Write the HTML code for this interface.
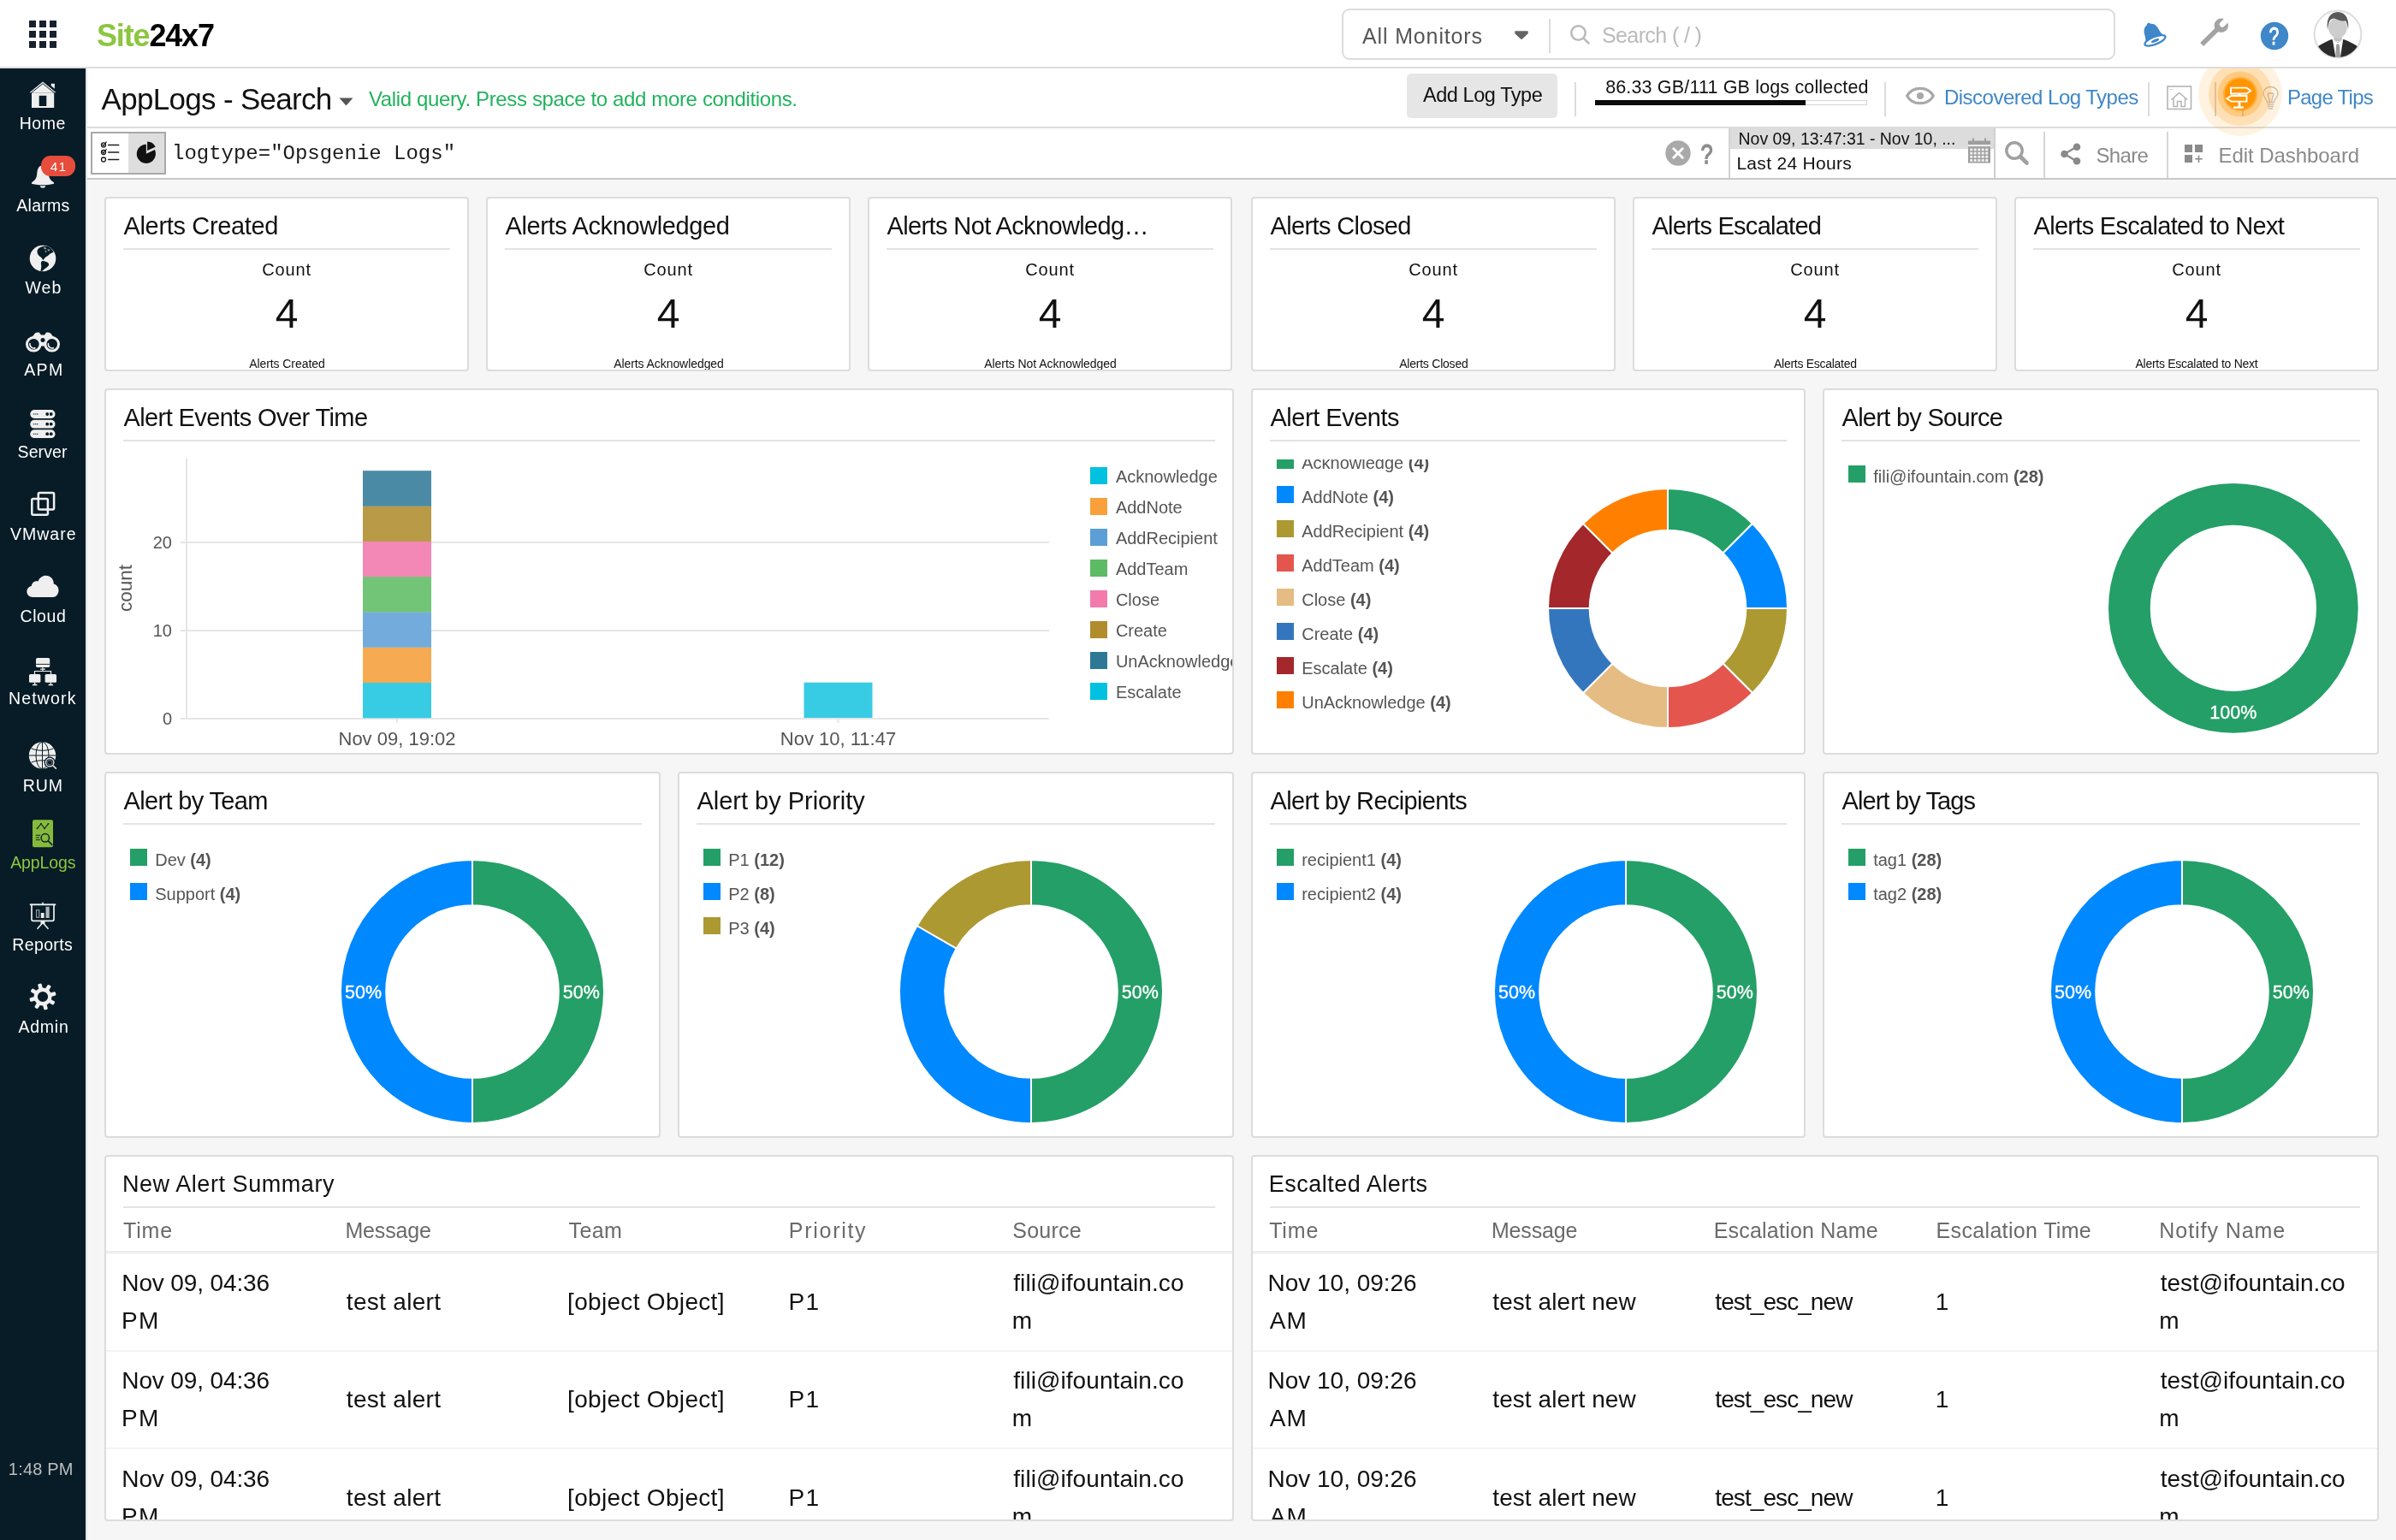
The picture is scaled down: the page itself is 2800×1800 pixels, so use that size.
<!DOCTYPE html>
<html lang="en">
<head>
<meta charset="utf-8">
<title>AppLogs - Search</title>
<style>
*{box-sizing:border-box;margin:0;padding:0}
html,body{width:2800px;height:1800px;overflow:hidden;background:#f6f6f6}
body{will-change:transform;position:relative;font-family:"Liberation Sans",sans-serif;color:#111;-webkit-font-smoothing:antialiased}
.abs{position:absolute}
.t{position:absolute;white-space:nowrap;line-height:1}
#hdr{position:absolute;left:0;top:0;width:2800px;height:80px;background:#fff;border-bottom:2px solid #dcdcdc}
#side{position:absolute;left:0;top:80px;width:100px;height:1720px;background:#081c27}
#sideb{position:absolute;left:100px;top:80px;width:2px;height:1720px;background:#e3e3e3}
#tbar{position:absolute;left:102px;top:80px;width:2698px;height:70px;background:#fff;border-bottom:2px solid #dcdcdc}
#qbar{position:absolute;left:102px;top:150px;width:2698px;height:60px;background:#fff;border-bottom:2px solid #c8c8c8}
.card{position:absolute;background:#fff;border:2px solid #dcdcdc;border-radius:4px;overflow:hidden}
.ctitle{position:absolute;left:20px;top:17px;font-size:28px;line-height:34px;white-space:nowrap;color:#111}
.cline{position:absolute;left:20px;right:20px;top:58px;height:2px;background:#e4e4e4}
.nav{position:absolute;left:0;width:100px;text-align:center;color:#fff;font-size:19px;line-height:1;white-space:nowrap}
.vdiv{position:absolute;width:2px;background:#dcdcdc}
.lg{position:absolute;font-size:20px;line-height:1;color:#555;white-space:nowrap}
.lg b{font-weight:bold;color:#555}
.sq{position:absolute;width:20px;height:20px}
.th{position:absolute;font-size:26px;line-height:1;color:#666;white-space:nowrap}
.td{position:absolute;font-size:27px;line-height:44px;color:#111;white-space:nowrap}
.rowline{position:absolute;left:0;right:0;height:2px;background:#f0f0f0}
svg{position:absolute;overflow:visible}
svg text{font-family:"Liberation Sans",sans-serif}
</style>
</head>
<body>
<div id="hdr">
  <svg style="left:34px;top:24px" width="32" height="32" viewBox="0 0 32 32" fill="#18222f">
    <rect x="0" y="0" width="8" height="8"/><rect x="12" y="0" width="8" height="8"/><rect x="24" y="0" width="8" height="8"/>
    <rect x="0" y="12" width="8" height="8"/><rect x="12" y="12" width="8" height="8"/><rect x="24" y="12" width="8" height="8"/>
    <rect x="0" y="24" width="8" height="8"/><rect x="12" y="24" width="8" height="8"/><rect x="24" y="24" width="8" height="8"/>
  </svg>
  <div class="t" id="logo" style="letter-spacing:-1.16px;left:113px;top:23.8px;font-size:36px;font-weight:bold;color:#000"><span style="color:#8cc63f">Site</span>24x7</div>
  <div class="abs" style="left:1568px;top:10px;width:904px;height:60px;border:2px solid #dcdcdc;border-radius:9px;background:#fff"></div>
  <div class="t" id="allmon" style="letter-spacing:0.86px;left:1592px;top:30.1px;font-size:25px;color:#555">All Monitors</div>
  <svg style="left:1769px;top:34.700px" width="18" height="12" viewBox="0 0 18 12"><path d="M1.300 1.200 H16.700 V4.200 L10 10.600 Q9 11.400 8 10.600 L1.300 4.200Z" fill="#646464"/></svg>
  <div class="vdiv" style="left:1810px;top:22px;height:40px"></div>
  <svg style="left:1834px;top:28px" width="26" height="26" viewBox="0 0 26 26" fill="none" stroke="#bbb" stroke-width="2.6" stroke-linecap="round"><circle cx="10.5" cy="10.5" r="8.2"/><path d="M16.8 16.8 L22.5 22.5"/></svg>
  <div class="t" id="srch" style="letter-spacing:-0.61px;left:1872px;top:28.8px;font-size:25px;color:#bbb">Search ( / )</div>
  <!-- bell -->
  <svg style="left:2498.5px;top:22.5px" width="32.3" height="32.3" viewBox="0 0 34 34">
    <g transform="rotate(-22 17 17)">
      <path d="M17 3.2 C18.3 3.2 19.2 4 19.3 5.1 C24 6.3 26 10.5 26.3 15.5 C26.6 20 28 23 30.5 25.5 V27 H3.5 V25.5 C6 23 7.4 20 7.7 15.5 C8 10.5 10 6.3 14.7 5.1 C14.8 4 15.7 3.2 17 3.2Z" fill="#3f87c9"/>
      <ellipse cx="17" cy="26.3" rx="13.6" ry="4.6" fill="#fff" stroke="#3f87c9" stroke-width="2.4"/>
      <ellipse cx="17" cy="26.6" rx="5.2" ry="1.7" fill="#3f87c9"/>
    </g>
  </svg>
  <!-- wrench -->
  <svg style="left:2568px;top:20px" width="38" height="38" viewBox="0 0 38 38">
    <path d="M5.100 32.100 L24.200 13.300" stroke="#a3a3a3" stroke-width="5.600" fill="none"/>
    <circle cx="27.800" cy="9.800" r="8.200" fill="#a3a3a3"/>
    <path d="M29 8.600 L40 -2.400" stroke="#fff" stroke-width="6.400" stroke-linecap="round" fill="none"/>
  </svg>
  <!-- help -->
  <svg style="left:2641px;top:25px" width="34" height="34" viewBox="0 0 34 34"><circle cx="17" cy="17" r="16.2" fill="#3f87c9"/>
    <text transform="translate(16.300 26.900) scale(0.730 1)" x="0" y="0" text-anchor="middle" font-size="29" fill="#fff" stroke="#fff" stroke-width="0.9">?</text></svg>
  <!-- avatar -->
  <svg style="left:2703px;top:11px" width="58" height="58" viewBox="0 0 58 58">
    <defs><clipPath id="avc"><circle cx="29" cy="29" r="27"/></clipPath></defs>
    <circle cx="29" cy="29" r="27.400" fill="#fff" stroke="#dcdcdc" stroke-width="2"/>
    <g clip-path="url(#avc)">
      <path d="M2 58 C3 50 5 45 6.800 42.400 C11 40 17 37 21.800 35.100 L29 38.500 L35.800 35.100 C41 37 47 40 51.200 42.400 C53 45 55 50 56 58Z" fill="#2b2b2b"/>
      <path d="M22.800 35.100 L26.200 54.500 V58 H32.200 V54.500 L35.200 35.100 L29 38.800Z" fill="#fff"/>
      <path d="M27 41.800 L29 40 L31 41.800 L32.200 58 H26.200Z" fill="#9d9d9d"/>
      <path d="M24.300 29 H33.700 V35.400 Q29 39.200 24.300 35.400Z" fill="#c0c0c0"/>
      <ellipse cx="28.900" cy="21.500" rx="10.800" ry="11.900" fill="#cdcdcd"/>
      <path d="M17 24 C15.300 10.500 20 3.200 29 3 C38 3.200 42.700 10.500 41 24 C40.600 19 39.800 15.600 38 13.200 C33 14.200 29 12 25 10.500 C21.500 10.200 19.500 12.500 18.800 15 C17.800 18 17.300 21 17 24Z" fill="#595959"/>
    </g>
  </svg>
</div>
<div id="side"></div>
<div id="sideb"></div>
<svg style="left:33px;top:94px" width="34" height="34" viewBox="0 0 34 34"><path d="M4 14.300 H30.200 V32 H4Z" fill="#efefef"/><path d="M1.400 14.300 L17 1.600 L32.600 14.300" fill="#efefef"/><path d="M1.800 14 L17 1.800 L32.200 14" fill="none" stroke="#081c27" stroke-width="1" transform="translate(0 1.900)"/><rect x="12.700" y="17.800" width="8.600" height="12.200" fill="#081c27"/><path d="M26.700 3.700 H30.900 V9.800 L26.700 6.200Z" fill="#efefef"/></svg>
<div class="t" style="letter-spacing:0.60px;left:22.64px;top:135.3px;font-size:19.5px;color:#fff;">Home</div>
<svg style="left:36px;top:192px" width="28" height="30" viewBox="0 0 28 30"><path d="M14 1.500 C8.500 1.500 7.600 6.500 7.200 11.500 C6.800 16.500 4.500 19 1.200 21.200 C0.600 21.700 0.800 22.600 1.800 22.900 C9 24.600 19 24.600 26.200 22.900 C27.200 22.600 27.400 21.700 26.800 21.200 C23.500 19 21.200 16.500 20.800 11.500 C20.400 6.500 19.500 1.500 14 1.500Z" fill="#efefef"/><path d="M10.600 25.300 A3.500 3.300 0 0 0 17.400 25.300Z" fill="#efefef"/></svg>
<div class="abs" style="left:48px;top:182px;width:40px;height:24px;border-radius:11px;background:#e74c3c"></div>
<div class="t" style="letter-spacing:1.20px;left:58.80px;top:186.7px;font-size:15.5px;color:#fff;">41</div>
<div class="t" style="letter-spacing:0.26px;left:19.35px;top:231.3px;font-size:19.5px;color:#fff;">Alarms</div>
<svg style="left:34px;top:286px" width="32" height="32" viewBox="0 0 32 32"><circle cx="16" cy="16" r="15.300" fill="#efefef"/><path d="M9.800 6.200 C11 3.600 15 1.700 19 1.500 C23 1.700 26.800 4.500 28.600 8.800 C27.500 9.800 26 9.400 24.600 10.600 C23 12 22 13.200 20.200 14 C18.600 14.800 17.600 16.600 16.400 18.200 C15.600 17 15 15.600 13.600 14.600 C11.600 13.200 10 11.600 9.700 9.600 C9.500 8.200 9.400 7.200 9.800 6.200Z" fill="#081c27"/><path d="M15 19.200 C17 18.500 20 19.600 22.200 21.200 C23.700 22.300 23.400 23.800 22 25.200 C20 27.200 17.200 28.600 15.600 30.700 L13.400 31.100 C14 28 14.600 26 14.100 23.600 C13.700 21.600 13.800 20 15 19.200Z" fill="#081c27"/><path d="M16.500 3.600 L19 3 L20.500 4.600 L18.500 5.600Z M21 5.500 L23.500 5.200 L24.500 7 L22.500 7.600Z M18.500 7.300 L20.200 7 L20.600 8.600 L19 9Z" fill="#9aa4a9"/></svg>
<div class="t" style="letter-spacing:1.05px;left:29.42px;top:327.3px;font-size:19.5px;color:#fff;">Web</div>
<svg style="left:29px;top:387px" width="42" height="26" viewBox="0 0 42 26"><path d="M10.500 4.500 C11.500 1.800 14.500 0.800 17 1.800 L19 4.500 H23 L25 1.800 C27.500 0.800 30.500 1.800 31.500 4.500 L36 9 H6Z" fill="#efefef"/><circle cx="10.300" cy="15.300" r="9.300" fill="#efefef"/><circle cx="31.700" cy="15.300" r="9.300" fill="#efefef"/><rect x="17" y="9" width="8" height="8.500" fill="#efefef"/><circle cx="10.300" cy="15.300" r="6.300" fill="#081c27"/><circle cx="31.700" cy="15.300" r="6.300" fill="#081c27"/><circle cx="21" cy="10.500" r="2.500" fill="#081c27"/><path d="M6.200 14 A4.500 4.500 0 0 0 12.500 19.500" fill="none" stroke="#efefef" stroke-width="1.500"/><path d="M27.600 14 A4.500 4.500 0 0 0 33.900 19.500" fill="none" stroke="#efefef" stroke-width="1.500"/></svg>
<div class="t" style="letter-spacing:1.34px;left:28.25px;top:423.2px;font-size:19.5px;color:#fff;">APM</div>
<svg style="left:35px;top:478px" width="30" height="36" viewBox="0 0 30 36"><rect x="0.300" y="1.1" width="29.200" height="9.800" rx="4.900" fill="#efefef"/><path d="M3.800 6.0 H9.500" stroke="#081c27" stroke-width="1.100" stroke-dasharray="1.400 0.700"/><circle cx="20.200" cy="6.0" r="1.900" fill="#081c27"/><circle cx="24.700" cy="6.0" r="1.900" fill="#081c27"/><rect x="0.300" y="12.8" width="29.200" height="9.800" rx="4.900" fill="#efefef"/><path d="M3.800 17.700000000000003 H9.500" stroke="#081c27" stroke-width="1.100" stroke-dasharray="1.400 0.700"/><circle cx="20.200" cy="17.700000000000003" r="1.900" fill="#081c27"/><circle cx="24.700" cy="17.700000000000003" r="1.900" fill="#081c27"/><rect x="0.300" y="24.3" width="29.200" height="9.800" rx="4.900" fill="#efefef"/><path d="M3.800 29.200000000000003 H9.500" stroke="#081c27" stroke-width="1.100" stroke-dasharray="1.400 0.700"/><circle cx="20.200" cy="29.200000000000003" r="1.900" fill="#081c27"/><circle cx="24.700" cy="29.200000000000003" r="1.900" fill="#081c27"/></svg>
<div class="t" style="letter-spacing:0.10px;left:20.56px;top:519.2px;font-size:19.5px;color:#fff;">Server</div>
<svg style="left:35px;top:573px" width="31" height="31" viewBox="0 0 31 31" fill="none" stroke="#efefef" stroke-width="2.500"><rect x="9.800" y="3" width="18.300" height="19.600" rx="1.500"/><rect x="2.300" y="10" width="18.600" height="18.700" rx="1.500"/></svg>
<div class="t" style="letter-spacing:0.97px;left:12.12px;top:615.2px;font-size:19.5px;color:#fff;">VMware</div>
<svg style="left:31px;top:672px" width="38" height="27" viewBox="0 0 38 27"><path d="M7.500 26 C3 26 0.400 22.800 0.400 19.500 C0.400 16 3 13.500 5.800 13 C6.200 9 9.500 6.500 13.500 7.500 C15 3 19 0.700 22.500 0.700 C28 0.700 32 5 31.800 10.500 C35.500 11.500 37.500 14.500 37.500 18 C37.500 22.500 34.500 26 30.500 26Z" fill="#efefef"/></svg>
<div class="t" style="letter-spacing:0.56px;left:23.58px;top:711.2px;font-size:19.5px;color:#fff;">Cloud</div>
<svg style="left:33px;top:768px" width="34" height="34" viewBox="0 0 34 34"><rect x="9" y="1" width="16.200" height="11" rx="1.800" fill="#efefef"/><path d="M9 8.400 H25.200" stroke="#081c27" stroke-width="0.900"/><path d="M17 12 V16.500 M14 14.200 H20 M7.500 20 V16.500 H26.500 V20" fill="none" stroke="#efefef" stroke-width="1.200"/><rect x="1" y="20" width="13.400" height="9.700" rx="1.500" fill="#efefef"/><rect x="19.600" y="20" width="13.400" height="9.700" rx="1.500" fill="#efefef"/><path d="M7.700 29.500 V32.200 M5 32.500 H10.400 M26.300 29.500 V32.200 M23.600 32.500 H29" stroke="#efefef" stroke-width="1.300"/></svg>
<div class="t" style="letter-spacing:1.16px;left:10.02px;top:807.1px;font-size:19.5px;color:#fff;">Network</div>
<svg style="left:33px;top:866px" width="34" height="34" viewBox="0 0 34 34"><circle cx="16.500" cy="17" r="15.700" fill="#efefef"/><g fill="none" stroke="#081c27" stroke-width="1"><path d="M16.500 1.300 V32.700 M0.800 17 H32.200 M3.500 8.800 C11 12 22 12 29.500 8.800 M3.500 25.200 C11 22 22 22 29.500 25.200"/><ellipse cx="16.500" cy="17" rx="7.500" ry="15.700"/></g><circle cx="25.200" cy="25.200" r="6.600" fill="#081c27"/><circle cx="25.200" cy="25.200" r="4.700" fill="none" stroke="#efefef" stroke-width="1.300"/><circle cx="25.200" cy="25.200" r="2.800" fill="none" stroke="#efefef" stroke-width="0.600" opacity="0.700"/><path d="M28.800 28.800 L32.800 32.600" stroke="#efefef" stroke-width="1.500"/></svg>
<div class="t" style="letter-spacing:0.85px;left:26.82px;top:909.2px;font-size:19.5px;color:#fff;">RUM</div>
<svg style="left:37px;top:957px" width="26" height="34" viewBox="0 0 26 34"><rect x="1" y="1.200" width="24" height="32" rx="2" fill="#86ba3b"/><g fill="none" stroke="#13222c"><path d="M6.500 11.300 L11 5.800 L15 11.300 L19.500 5.800" stroke-width="1.100"/><circle cx="6.500" cy="11.300" r="0.900" fill="#13222c" stroke="none"/><circle cx="11" cy="5.800" r="0.900" fill="#13222c" stroke="none"/><circle cx="15" cy="11.300" r="0.900" fill="#13222c" stroke="none"/><circle cx="19.500" cy="5.800" r="0.900" fill="#13222c" stroke="none"/><path d="M4.800 19.300 H10 M4.800 22 H9 M4.800 24.700 H10" stroke-width="1"/><circle cx="15.800" cy="22.300" r="4.700" stroke-width="1.500"/><path d="M19.300 25.800 L24.300 30.800" stroke-width="1.700"/></g></svg>
<div class="t" style="letter-spacing:-0.12px;left:12.20px;top:999.1px;font-size:19.5px;color:#8cc63f;">AppLogs</div>
<svg style="left:34px;top:1054px" width="32" height="33" viewBox="0 0 32 33"><g fill="none" stroke="#efefef"><path d="M16 0.800 V3" stroke-width="1.600"/><path d="M0.800 3.300 H31.200" stroke-width="1.900"/><path d="M3 3.500 V20.500 Q3 22.300 4.800 22.300 H27.200 Q29 22.300 29 20.500 V3.500" stroke-width="1.700"/><path d="M13.500 22.500 H18.500 V26 H13.500Z" fill="#efefef" stroke="none"/><path d="M15.500 25 L9.500 31.800 M16.500 25 L22.500 31.800" stroke-width="1.600"/><rect x="8.600" y="9.700" width="3.200" height="8.500" stroke-width="1.100" stroke="#9aa3a8"/></g><rect x="13.800" y="13" width="3.800" height="6" fill="#efefef"/><rect x="19.500" y="5.800" width="4.200" height="13.200" fill="#aeb5b9"/></svg>
<div class="t" style="letter-spacing:0.35px;left:14.32px;top:1095.3px;font-size:19.5px;color:#fff;">Reports</div>
<svg style="left:34px;top:1149px" width="32" height="32" viewBox="-16 -16 32 32"><rect x="-2.300" y="-15.600" width="4.600" height="7.500" rx="1.400" fill="#efefef" transform="rotate(-14)"/><rect x="-2.300" y="-15.600" width="4.600" height="7.500" rx="1.400" fill="#efefef" transform="rotate(31)"/><rect x="-2.300" y="-15.600" width="4.600" height="7.500" rx="1.400" fill="#efefef" transform="rotate(76)"/><rect x="-2.300" y="-15.600" width="4.600" height="7.500" rx="1.400" fill="#efefef" transform="rotate(121)"/><rect x="-2.300" y="-15.600" width="4.600" height="7.500" rx="1.400" fill="#efefef" transform="rotate(166)"/><rect x="-2.300" y="-15.600" width="4.600" height="7.500" rx="1.400" fill="#efefef" transform="rotate(211)"/><rect x="-2.300" y="-15.600" width="4.600" height="7.500" rx="1.400" fill="#efefef" transform="rotate(256)"/><rect x="-2.300" y="-15.600" width="4.600" height="7.500" rx="1.400" fill="#efefef" transform="rotate(301)"/><circle r="8.300" fill="none" stroke="#efefef" stroke-width="4.400"/></svg>
<div class="t" style="letter-spacing:0.75px;left:21.50px;top:1191.3px;font-size:19.5px;color:#fff;">Admin</div>
<div class="t" style="letter-spacing:0.20px;left:9.82px;top:1707.1px;font-size:20px;color:#bdbdbd;">1:48 PM</div>
<div id="tbar"></div>
<div id="qbar"></div>
<div class="t" style="letter-spacing:-0.69px;left:118.50px;top:97.7px;font-size:35px;color:#111;">AppLogs - Search</div>
<svg style="left:396px;top:114px" width="17" height="10" viewBox="0 0 17 10"><path d="M0.5 0.5 H16.5 L8.5 9.6Z" fill="#555"/></svg>
<div class="t" style="letter-spacing:-0.36px;left:430.90px;top:104.1px;font-size:24px;color:#21b35d;">Valid query. Press space to add more conditions.</div>
<div class="abs" style="left:1644px;top:86px;width:176px;height:52px;background:#e6e6e6;border-radius:5px"></div>
<div class="t" style="letter-spacing:-0.44px;left:1663.00px;top:99.7px;font-size:23.5px;color:#111;">Add Log Type</div>
<div class="vdiv" style="left:1840px;top:96px;height:40px"></div>
<div class="t" style="letter-spacing:0.16px;left:1876.14px;top:92.4px;font-size:21.5px;color:#111;">86.33 GB/111 GB logs collected</div>
<div class="abs" style="left:1864px;top:117px;width:318px;height:6px;background:#fff;border:1px solid #d4d4d4"></div>
<div class="abs" style="left:1864px;top:117px;width:246px;height:6px;background:#0a0a0a"></div>
<div class="vdiv" style="left:2202px;top:96px;height:40px"></div>
<svg style="left:2226px;top:99.600px" width="36" height="24" viewBox="0 0 36 24" fill="none"><path d="M2.600 12 C9 0.400 27 0.400 33.400 12 C27 23.600 9 23.600 2.600 12Z" stroke="#a9a9a9" stroke-width="3.200" stroke-linejoin="round"/><circle cx="18" cy="12" r="4.100" fill="#a9a9a9"/></svg>
<div class="t" style="letter-spacing:-0.51px;left:2271.94px;top:101.9px;font-size:24px;color:#3f87c9;">Discovered Log Types</div>
<div class="vdiv" style="left:2510px;top:96px;height:40px"></div>
<svg style="left:2532px;top:100px" width="30" height="29" viewBox="0 0 30 29" fill="none" stroke="#b4b4b4"><rect x="1" y="1" width="27.500" height="26.500" stroke-width="1.600"/><path d="M3.500 4.500 H8" stroke-width="1.200" stroke-dasharray="1.200 1"/><path d="M5.500 16.500 L14.800 8.500 L24 16.500 M8 14.500 V24.500 H12.500 V18.500 H17 V24.500 H21.500 V14.500" stroke-width="1.500"/></svg>
<div class="vdiv" style="left:2588px;top:96px;height:40px;background:#d2d2d2"></div>
<div class="vdiv" style="left:2620px;top:96px;height:40px;background:#d2d2d2"></div>
<svg style="left:2643px;top:100px" width="22" height="30" viewBox="0 0 22 30" fill="none" stroke="#c4c4c4" stroke-width="1.400"><path d="M6.500 19.500 C6.500 16 2 14 2 9.500 C2 4.500 6 1.500 10.500 1.500 C15 1.500 19 4.500 19 9.500 C19 14 14.500 16 14.500 19.500Z"/><path d="M7 9 L9.500 19 M14 9 L11.500 19 M7 9 H14"/><path d="M6.800 22 H14.200 M7 24.500 H14 M8 27 H13" stroke-width="1.500"/></svg>
<div class="abs" style="left:2560px;top:80px;width:120px;height:90px;overflow:hidden"><svg style="left:8.100px;top:-20px" width="100" height="100" viewBox="-50 -50 100 100"><circle r="48.800" fill="#ff9500" fill-opacity="0.120"/><circle r="36.900" fill="#ff9500" fill-opacity="0.200"/><circle r="26.400" fill="#ff9500" fill-opacity="0.290"/><circle r="20" fill="#ff9500" fill-opacity="0.550"/><circle r="18" fill="#ff9500"/><g fill="none" stroke="#fff" stroke-width="1.800" stroke-linejoin="miter"><path d="M-11 -7.300 H7.500 L12.300 -3.900 L7.500 -0.500 H-11Z"/><path d="M7.500 2 H-10.500 L-15.700 5.300 L-10.500 8.600 H7.500Z"/><path d="M-1 -0.500 V2 M-1 8.600 V15.500" stroke-width="2.700"/><path d="M-8 15.600 H4" stroke-width="2.300"/></g></svg></div>
<div class="t" style="letter-spacing:-0.73px;left:2672.94px;top:101.9px;font-size:24px;color:#3f87c9;">Page Tips</div>
<div class="abs" style="left:106px;top:154px;width:88px;height:50px;border:2px solid #a8a8a8;background:#fff"></div>
<div class="abs" style="left:150px;top:156px;width:42px;height:46px;background:#dedede"></div>
<svg style="left:110px;top:160px" width="36" height="36" viewBox="110 160 36 36" fill="none" stroke="#1c1c1c"><circle cx="121" cy="169.4" r="2.500" stroke-width="1.300"/><path d="M126.700 169.4 H138.700" stroke-width="1.500" stroke-linecap="round"/><path d="M119.700 168.90 L121 170.40 L124.300 165.90" stroke-width="1.200" stroke-linecap="round" stroke-linejoin="round"/><circle cx="121" cy="178" r="2.500" stroke-width="1.300"/><path d="M126.700 178 H138.700" stroke-width="1.500" stroke-linecap="round"/><path d="M119.700 177.50 L121 179.00 L124.300 174.50" stroke-width="1.200" stroke-linecap="round" stroke-linejoin="round"/><circle cx="121" cy="186.5" r="2.500" stroke-width="1.300"/><path d="M126.700 186.5 H138.700" stroke-width="1.500" stroke-linecap="round"/></svg>
<svg style="left:156px;top:162px" width="32" height="34" viewBox="156 162 32 34"><path d="M170.85 179.8 L180.91 175.11 A11.1 11.1 0 1 1 170.85 168.70Z" fill="#111"/><path d="M172.1 176.1 L172.10 165.60 A10.5 10.5 0 0 1 181.62 171.66Z" fill="#111"/></svg>
<div class="t" style="letter-spacing:-0.01px;left:201.00px;top:168.2px;font-size:24px;color:#1a1a1a;font-family:'Liberation Mono',monospace;">logtype="Opsgenie Logs"</div>
<svg style="left:1946px;top:164px" width="30" height="30" viewBox="0 0 30 30"><circle cx="15" cy="15" r="14.700" fill="#a9a9a9"/><path d="M9.800 9.800 L20.200 20.200 M20.200 9.800 L9.800 20.200" stroke="#fff" stroke-width="3" stroke-linecap="round"/></svg>
<svg style="left:1980px;top:160px" width="30" height="40" viewBox="0 0 30 40"><text transform="translate(14.500 31) scale(0.800 1)" text-anchor="middle" font-size="31.500" fill="#8c8c8c" stroke="#8c8c8c" stroke-width="1.400">?</text></svg>
<div class="abs" style="left:2020px;top:150px;width:2px;height:58px;background:#d2d2d2"></div>
<div class="abs" style="left:2022px;top:150px;width:308px;height:24px;background:#dcdcdc"></div>
<div class="abs" style="left:2330px;top:150px;width:2px;height:58px;background:#cfcfcf"></div>
<div class="t" style="letter-spacing:-0.03px;left:2031.52px;top:153.1px;font-size:19.5px;color:#111;">Nov 09, 13:47:31 - Nov 10, ...</div>
<div class="t" style="letter-spacing:0.30px;left:2029.40px;top:179.8px;font-size:21px;color:#111;">Last 24 Hours</div>
<svg style="left:2300px;top:161px" width="26" height="30" viewBox="0 0 26 30"><rect x="0" y="3.500" width="26" height="26" fill="#9e9e9e"/><rect x="0" y="8" width="26" height="2.200" fill="#ececec"/><rect x="5" y="0.500" width="2" height="5" fill="#9e9e9e"/><rect x="19" y="0.500" width="2" height="5" fill="#9e9e9e"/><rect x="2.2" y="12.5" width="3" height="2.800" fill="#f1f1f1"/><rect x="6.7" y="12.5" width="3" height="2.800" fill="#f1f1f1"/><rect x="11.2" y="12.5" width="3" height="2.800" fill="#f1f1f1"/><rect x="15.7" y="12.5" width="3" height="2.800" fill="#f1f1f1"/><rect x="20.2" y="12.5" width="3" height="2.800" fill="#f1f1f1"/><rect x="2.2" y="16.7" width="3" height="2.800" fill="#f1f1f1"/><rect x="6.7" y="16.7" width="3" height="2.800" fill="#f1f1f1"/><rect x="11.2" y="16.7" width="3" height="2.800" fill="#f1f1f1"/><rect x="15.7" y="16.7" width="3" height="2.800" fill="#f1f1f1"/><rect x="20.2" y="16.7" width="3" height="2.800" fill="#f1f1f1"/><rect x="2.2" y="20.9" width="3" height="2.800" fill="#f1f1f1"/><rect x="6.7" y="20.9" width="3" height="2.800" fill="#f1f1f1"/><rect x="11.2" y="20.9" width="3" height="2.800" fill="#f1f1f1"/><rect x="15.7" y="20.9" width="3" height="2.800" fill="#f1f1f1"/><rect x="20.2" y="20.9" width="3" height="2.800" fill="#f1f1f1"/><rect x="2.2" y="25.1" width="3" height="2.800" fill="#f1f1f1"/><rect x="6.7" y="25.1" width="3" height="2.800" fill="#f1f1f1"/><rect x="11.2" y="25.1" width="3" height="2.800" fill="#f1f1f1"/><rect x="15.7" y="25.1" width="3" height="2.800" fill="#f1f1f1"/><rect x="20.2" y="25.1" width="3" height="2.800" fill="#f1f1f1"/></svg>
<svg style="left:2342px;top:164px" width="30" height="30" viewBox="0 0 30 30" fill="none" stroke="#a0a0a0" stroke-linecap="round"><circle cx="12" cy="12" r="9.200" stroke-width="3.400"/><path d="M19.500 19.500 L26.500 26.500" stroke-width="4.600"/></svg>
<div class="vdiv" style="left:2388px;top:154px;height:54px;background:#d6d6d6"></div>
<svg style="left:2407px;top:167px" width="26" height="26" viewBox="0 0 26 26"><path d="M5.500 13 L20 4.500 M5.500 13 L20 21.500" stroke="#8a8a8a" stroke-width="2.400"/><circle cx="5.500" cy="13" r="4.300" fill="#8a8a8a"/><circle cx="20" cy="4.800" r="4.300" fill="#8a8a8a"/><circle cx="20" cy="21.200" r="4.300" fill="#8a8a8a"/></svg>
<div class="t" style="letter-spacing:-0.64px;left:2449.45px;top:170.1px;font-size:24px;color:#8a8a8a;">Share</div>
<div class="vdiv" style="left:2532px;top:154px;height:54px;background:#d6d6d6"></div>
<svg style="left:2553px;top:169px" width="22" height="22" viewBox="0 0 22 22" fill="#8a8a8a"><rect x="0" y="0" width="9" height="9"/><rect x="12" y="0" width="9" height="9"/><rect x="0" y="12" width="9" height="9"/><path d="M16.500 12.500 V21 M12.200 16.800 H20.800" stroke="#8a8a8a" stroke-width="1.600" fill="none"/></svg>
<div class="t" style="letter-spacing:-0.06px;left:2592.54px;top:170.1px;font-size:24px;color:#8a8a8a;">Edit Dashboard</div>
<div class="card" style="left:122px;top:230px;width:426px;height:204px">
<div class="t" style="letter-spacing:-0.34px;left:20.50px;top:17.7px;font-size:29px;color:#111;">Alerts Created</div>
<div class="abs" style="left:20px;top:58px;width:382px;height:2px;background:#e3e3e3"></div>
<div class="t" style="letter-spacing:0.84px;left:182.26px;top:73.1px;font-size:20px;color:#111;">Count</div>
<div class="t" style="left:211.0px;transform:translateX(-50%);top:111.0px;font-size:48px;color:#111;">4</div>
<div class="t" style="letter-spacing:-0.07px;left:167.15px;top:185.9px;font-size:14px;color:#111;">Alerts Created</div>
</div>
<div class="card" style="left:568px;top:230px;width:426px;height:204px">
<div class="t" style="letter-spacing:-0.38px;left:20.50px;top:17.7px;font-size:29px;color:#111;">Alerts Acknowledged</div>
<div class="abs" style="left:20px;top:58px;width:382px;height:2px;background:#e3e3e3"></div>
<div class="t" style="letter-spacing:0.84px;left:182.26px;top:73.1px;font-size:20px;color:#111;">Count</div>
<div class="t" style="left:211.0px;transform:translateX(-50%);top:111.0px;font-size:48px;color:#111;">4</div>
<div class="t" style="letter-spacing:-0.07px;left:147.15px;top:185.9px;font-size:14px;color:#111;">Alerts Acknowledged</div>
</div>
<div class="card" style="left:1014px;top:230px;width:426px;height:204px">
<div class="t" style="letter-spacing:-0.62px;left:20.50px;top:17.7px;font-size:29px;color:#111;">Alerts Not Acknowledg…</div>
<div class="abs" style="left:20px;top:58px;width:382px;height:2px;background:#e3e3e3"></div>
<div class="t" style="letter-spacing:0.84px;left:182.26px;top:73.1px;font-size:20px;color:#111;">Count</div>
<div class="t" style="left:211.0px;transform:translateX(-50%);top:111.0px;font-size:48px;color:#111;">4</div>
<div class="t" style="letter-spacing:-0.05px;left:134.20px;top:185.9px;font-size:14px;color:#111;">Alerts Not Acknowledged</div>
</div>
<div class="card" style="left:1462px;top:230px;width:426px;height:204px">
<div class="t" style="letter-spacing:-0.63px;left:20.50px;top:17.7px;font-size:29px;color:#111;">Alerts Closed</div>
<div class="abs" style="left:20px;top:58px;width:382px;height:2px;background:#e3e3e3"></div>
<div class="t" style="letter-spacing:0.84px;left:182.26px;top:73.1px;font-size:20px;color:#111;">Count</div>
<div class="t" style="left:211.0px;transform:translateX(-50%);top:111.0px;font-size:48px;color:#111;">4</div>
<div class="t" style="letter-spacing:-0.22px;left:171.15px;top:185.9px;font-size:14px;color:#111;">Alerts Closed</div>
</div>
<div class="card" style="left:1908px;top:230px;width:426px;height:204px">
<div class="t" style="letter-spacing:-0.74px;left:20.50px;top:17.7px;font-size:29px;color:#111;">Alerts Escalated</div>
<div class="abs" style="left:20px;top:58px;width:382px;height:2px;background:#e3e3e3"></div>
<div class="t" style="letter-spacing:0.84px;left:182.26px;top:73.1px;font-size:20px;color:#111;">Count</div>
<div class="t" style="left:211.0px;transform:translateX(-50%);top:111.0px;font-size:48px;color:#111;">4</div>
<div class="t" style="letter-spacing:-0.28px;left:163.00px;top:185.9px;font-size:14px;color:#111;">Alerts Escalated</div>
</div>
<div class="card" style="left:2354px;top:230px;width:426px;height:204px">
<div class="t" style="letter-spacing:-0.70px;left:20.50px;top:17.7px;font-size:29px;color:#111;">Alerts Escalated to Next</div>
<div class="abs" style="left:20px;top:58px;width:382px;height:2px;background:#e3e3e3"></div>
<div class="t" style="letter-spacing:0.84px;left:182.26px;top:73.1px;font-size:20px;color:#111;">Count</div>
<div class="t" style="left:211.0px;transform:translateX(-50%);top:111.0px;font-size:48px;color:#111;">4</div>
<div class="t" style="letter-spacing:-0.27px;left:139.50px;top:185.9px;font-size:14px;color:#111;">Alerts Escalated to Next</div>
</div>
<div class="card" style="left:122px;top:454px;width:1320px;height:428px">
<div class="t" style="letter-spacing:-0.60px;left:20.50px;top:17.7px;font-size:29px;color:#111;">Alert Events Over Time</div>
<div class="abs" style="left:20px;top:58px;width:1276px;height:2px;background:#e3e3e3"></div>
<svg style="left:-124px;top:-456px" width="1442" height="882" viewBox="0 0 1442 882"><rect x="211" y="633" width="1015" height="2" fill="#e6e6e6"/><rect x="211" y="736" width="1015" height="2" fill="#e6e6e6"/><rect x="211" y="839" width="1015" height="2" fill="#e6e6e6"/><rect x="217" y="536" width="2" height="305" fill="#e6e6e6"/><rect x="463" y="840" width="2" height="5" fill="#e6e6e6"/><rect x="978.5" y="840" width="2" height="5" fill="#e6e6e6"/><rect x="424" y="797.74" width="80" height="41.56" fill="rgb(56,203,228)"/><rect x="424" y="756.48" width="80" height="41.56" fill="rgb(246,171,82)"/><rect x="424" y="715.22" width="80" height="41.56" fill="rgb(115,172,220)"/><rect x="424" y="673.96" width="80" height="41.56" fill="rgb(114,196,119)"/><rect x="424" y="632.70" width="80" height="41.56" fill="rgb(243,136,183)"/><rect x="424" y="591.44" width="80" height="41.56" fill="rgb(185,154,70)"/><rect x="424" y="550.18" width="80" height="41.56" fill="rgb(74,138,164)"/><rect x="939.500" y="797.74" width="80" height="41.26" fill="rgb(56,203,228)"/><text x="201" y="641.2" text-anchor="end" font-size="20" fill="#555">20</text><text x="201" y="744.2" text-anchor="end" font-size="20" fill="#555">10</text><text x="201" y="847.2" text-anchor="end" font-size="20" fill="#555">0</text><text x="464" y="870.800" text-anchor="middle" font-size="22" fill="#555">Nov 09, 19:02</text><text x="979.500" y="870.800" text-anchor="middle" font-size="22" fill="#555">Nov 10, 11:47</text><text transform="translate(154 687.500) rotate(-90)" text-anchor="middle" font-size="22.500" fill="#555">count</text></svg>
<div class="sq" style="left:1150px;top:90px;background:#00c1e0"></div>
<div class="t" style="left:1179.90px;top:90.9px;font-size:20px;color:#555;">Acknowledge</div>
<div class="sq" style="left:1150px;top:126px;background:#f9a03a"></div>
<div class="t" style="left:1179.90px;top:126.9px;font-size:20px;color:#555;">AddNote</div>
<div class="sq" style="left:1150px;top:162px;background:#5b9fd6"></div>
<div class="t" style="left:1179.90px;top:162.9px;font-size:20px;color:#555;">AddRecipient</div>
<div class="sq" style="left:1150px;top:198px;background:#5dba65"></div>
<div class="t" style="left:1179.90px;top:198.9px;font-size:20px;color:#555;">AddTeam</div>
<div class="sq" style="left:1150px;top:234px;background:#f27bac"></div>
<div class="t" style="left:1179.90px;top:234.9px;font-size:20px;color:#555;">Close</div>
<div class="sq" style="left:1150px;top:270px;background:#b08c2d"></div>
<div class="t" style="left:1179.90px;top:270.9px;font-size:20px;color:#555;">Create</div>
<div class="sq" style="left:1150px;top:306px;background:#2e7896"></div>
<div class="t" style="left:1179.90px;top:306.9px;font-size:20px;color:#555;">UnAcknowledge</div>
<div class="sq" style="left:1150px;top:342px;background:#00c1e0"></div>
<div class="t" style="left:1179.90px;top:342.9px;font-size:20px;color:#555;">Escalate</div>
</div>
<div class="card" style="left:1462px;top:454px;width:648px;height:428px">
<div class="t" style="letter-spacing:-0.48px;left:20.50px;top:17.7px;font-size:29px;color:#111;">Alert Events</div>
<div class="abs" style="left:20px;top:58px;width:604px;height:2px;background:#e3e3e3"></div>
<div class="abs" style="left:0;top:81px;width:420px;height:330px;overflow:hidden">
<div class="sq" style="left:28px;top:-9px;background:#249f67"></div>
<div class="t" style="left:57.20px;top:-6.2px;font-size:20px;color:#555;">Acknowledge <b>(4)</b></div>
<div class="sq" style="left:28px;top:31px;background:#0088ff"></div>
<div class="t" style="left:57.20px;top:33.8px;font-size:20px;color:#555;">AddNote <b>(4)</b></div>
<div class="sq" style="left:28px;top:71px;background:#ad9932"></div>
<div class="t" style="left:57.20px;top:73.8px;font-size:20px;color:#555;">AddRecipient <b>(4)</b></div>
<div class="sq" style="left:28px;top:111px;background:#e4554e"></div>
<div class="t" style="left:57.20px;top:113.8px;font-size:20px;color:#555;">AddTeam <b>(4)</b></div>
<div class="sq" style="left:28px;top:151px;background:#e5bc83"></div>
<div class="t" style="left:57.20px;top:153.8px;font-size:20px;color:#555;">Close <b>(4)</b></div>
<div class="sq" style="left:28px;top:191px;background:#3376bd"></div>
<div class="t" style="left:57.20px;top:193.8px;font-size:20px;color:#555;">Create <b>(4)</b></div>
<div class="sq" style="left:28px;top:231px;background:#a3272b"></div>
<div class="t" style="left:57.20px;top:233.8px;font-size:20px;color:#555;">Escalate <b>(4)</b></div>
<div class="sq" style="left:28px;top:271px;background:#ff8000"></div>
<div class="t" style="left:57.20px;top:273.8px;font-size:20px;color:#555;">UnAcknowledge <b>(4)</b></div>
</div>
<svg style="left:341.90px;top:111.75px" width="286.00" height="286.00" viewBox="1805.90 567.75 286.00 286.00"><path d="M1948.90 570.75 A140 140 0 0 1 2047.89 611.76 L2013.46 646.19 A91.3 91.3 0 0 0 1948.90 619.45Z" fill="#249f67" stroke="#fff" stroke-width="2" stroke-linejoin="round"/><path d="M2047.89 611.76 A140 140 0 0 1 2088.90 710.75 L2040.20 710.75 A91.3 91.3 0 0 0 2013.46 646.19Z" fill="#0088ff" stroke="#fff" stroke-width="2" stroke-linejoin="round"/><path d="M2088.90 710.75 A140 140 0 0 1 2047.89 809.74 L2013.46 775.31 A91.3 91.3 0 0 0 2040.20 710.75Z" fill="#ad9932" stroke="#fff" stroke-width="2" stroke-linejoin="round"/><path d="M2047.89 809.74 A140 140 0 0 1 1948.90 850.75 L1948.90 802.05 A91.3 91.3 0 0 0 2013.46 775.31Z" fill="#e4554e" stroke="#fff" stroke-width="2" stroke-linejoin="round"/><path d="M1948.90 850.75 A140 140 0 0 1 1849.91 809.74 L1884.34 775.31 A91.3 91.3 0 0 0 1948.90 802.05Z" fill="#e5bc83" stroke="#fff" stroke-width="2" stroke-linejoin="round"/><path d="M1849.91 809.74 A140 140 0 0 1 1808.90 710.75 L1857.60 710.75 A91.3 91.3 0 0 0 1884.34 775.31Z" fill="#3376bd" stroke="#fff" stroke-width="2" stroke-linejoin="round"/><path d="M1808.90 710.75 A140 140 0 0 1 1849.91 611.76 L1884.34 646.19 A91.3 91.3 0 0 0 1857.60 710.75Z" fill="#a3272b" stroke="#fff" stroke-width="2" stroke-linejoin="round"/><path d="M1849.91 611.76 A140 140 0 0 1 1948.90 570.75 L1948.90 619.45 A91.3 91.3 0 0 0 1884.34 646.19Z" fill="#ff8000" stroke="#fff" stroke-width="2" stroke-linejoin="round"/></svg>
</div>
<div class="card" style="left:2130px;top:454px;width:650px;height:428px">
<div class="t" style="letter-spacing:-0.71px;left:20.50px;top:17.7px;font-size:29px;color:#111;">Alert by Source</div>
<div class="abs" style="left:20px;top:58px;width:606px;height:2px;background:#e3e3e3"></div>
<div class="sq" style="left:28px;top:88px;background:#249f67"></div>
<div class="t" style="left:57.20px;top:90.8px;font-size:20px;color:#555;">fili@ifountain.com <b>(28)</b></div>
<svg style="left:328.15px;top:104.90px" width="299.70" height="299.70" viewBox="2460.15 560.90 299.70 299.70"><circle cx="2610" cy="710.75" r="121.475" fill="none" stroke="#249f67" stroke-width="48.75"/><text x="2610.0" y="839.9" text-anchor="middle" font-size="21.5" fill="#fff" stroke="#fff" stroke-width="0.35">100%</text></svg>
</div>
<div class="card" style="left:122px;top:902px;width:650px;height:428px">
<div class="t" style="letter-spacing:-0.65px;left:20.50px;top:17.7px;font-size:29px;color:#111;">Alert by Team</div>
<div class="abs" style="left:20px;top:58px;width:606px;height:2px;background:#e3e3e3"></div>
<div class="sq" style="left:28px;top:88px;background:#249f67"></div>
<div class="t" style="left:57.20px;top:90.8px;font-size:20px;color:#555;">Dev <b>(4)</b></div>
<div class="sq" style="left:28px;top:128px;background:#0088ff"></div>
<div class="t" style="left:57.20px;top:130.8px;font-size:20px;color:#555;">Support <b>(4)</b></div>
<svg style="left:270.80px;top:97.90px" width="314.00" height="314.00" viewBox="394.80 1001.90 314.00 314.00"><path d="M551.80 1004.90 A154 154 0 0 1 551.80 1312.90 L551.80 1259.70 A100.8 100.8 0 0 0 551.80 1058.10Z" fill="#249f67" stroke="#fff" stroke-width="2" stroke-linejoin="round"/><path d="M551.80 1312.90 A154 154 0 0 1 551.80 1004.90 L551.80 1058.10 A100.8 100.8 0 0 0 551.80 1259.70Z" fill="#0088ff" stroke="#fff" stroke-width="2" stroke-linejoin="round"/><text x="679.2" y="1166.6" text-anchor="middle" font-size="21.5" fill="#fff" stroke="#fff" stroke-width="0.35">50%</text><text x="424.4" y="1166.6" text-anchor="middle" font-size="21.5" fill="#fff" stroke="#fff" stroke-width="0.35">50%</text></svg>
</div>
<div class="card" style="left:792px;top:902px;width:650px;height:428px">
<div class="t" style="letter-spacing:-0.02px;left:20.50px;top:17.7px;font-size:29px;color:#111;">Alert by Priority</div>
<div class="abs" style="left:20px;top:58px;width:606px;height:2px;background:#e3e3e3"></div>
<div class="sq" style="left:28px;top:88px;background:#249f67"></div>
<div class="t" style="left:57.20px;top:90.8px;font-size:20px;color:#555;">P1 <b>(12)</b></div>
<div class="sq" style="left:28px;top:128px;background:#0088ff"></div>
<div class="t" style="left:57.20px;top:130.8px;font-size:20px;color:#555;">P2 <b>(8)</b></div>
<div class="sq" style="left:28px;top:168px;background:#ad9932"></div>
<div class="t" style="left:57.20px;top:170.8px;font-size:20px;color:#555;">P3 <b>(4)</b></div>
<svg style="left:253.80px;top:97.90px" width="314.00" height="314.00" viewBox="1047.80 1001.90 314.00 314.00"><path d="M1204.80 1004.90 A154 154 0 0 1 1204.80 1312.90 L1204.80 1259.70 A100.8 100.8 0 0 0 1204.80 1058.10Z" fill="#249f67" stroke="#fff" stroke-width="2" stroke-linejoin="round"/><path d="M1204.80 1312.90 A154 154 0 0 1 1071.43 1081.90 L1117.50 1108.50 A100.8 100.8 0 0 0 1204.80 1259.70Z" fill="#0088ff" stroke="#fff" stroke-width="2" stroke-linejoin="round"/><path d="M1071.43 1081.90 A154 154 0 0 1 1204.80 1004.90 L1204.80 1058.10 A100.8 100.8 0 0 0 1117.50 1108.50Z" fill="#ad9932" stroke="#fff" stroke-width="2" stroke-linejoin="round"/><text x="1332.2" y="1166.6" text-anchor="middle" font-size="21.5" fill="#fff" stroke="#fff" stroke-width="0.35">50%</text></svg>
</div>
<div class="card" style="left:1462px;top:902px;width:648px;height:428px">
<div class="t" style="letter-spacing:-0.64px;left:20.50px;top:17.7px;font-size:29px;color:#111;">Alert by Recipients</div>
<div class="abs" style="left:20px;top:58px;width:604px;height:2px;background:#e3e3e3"></div>
<div class="sq" style="left:28px;top:88px;background:#249f67"></div>
<div class="t" style="left:57.20px;top:90.8px;font-size:20px;color:#555;">recipient1 <b>(4)</b></div>
<div class="sq" style="left:28px;top:128px;background:#0088ff"></div>
<div class="t" style="left:57.20px;top:130.8px;font-size:20px;color:#555;">recipient2 <b>(4)</b></div>
<svg style="left:278.90px;top:97.90px" width="314.00" height="314.00" viewBox="1742.90 1001.90 314.00 314.00"><path d="M1899.90 1004.90 A154 154 0 0 1 1899.90 1312.90 L1899.90 1259.70 A100.8 100.8 0 0 0 1899.90 1058.10Z" fill="#249f67" stroke="#fff" stroke-width="2" stroke-linejoin="round"/><path d="M1899.90 1312.90 A154 154 0 0 1 1899.90 1004.90 L1899.90 1058.10 A100.8 100.8 0 0 0 1899.90 1259.70Z" fill="#0088ff" stroke="#fff" stroke-width="2" stroke-linejoin="round"/><text x="2027.3" y="1166.6" text-anchor="middle" font-size="21.5" fill="#fff" stroke="#fff" stroke-width="0.35">50%</text><text x="1772.5" y="1166.6" text-anchor="middle" font-size="21.5" fill="#fff" stroke="#fff" stroke-width="0.35">50%</text></svg>
</div>
<div class="card" style="left:2130px;top:902px;width:650px;height:428px">
<div class="t" style="letter-spacing:-0.88px;left:20.50px;top:17.7px;font-size:29px;color:#111;">Alert by Tags</div>
<div class="abs" style="left:20px;top:58px;width:606px;height:2px;background:#e3e3e3"></div>
<div class="sq" style="left:28px;top:88px;background:#249f67"></div>
<div class="t" style="left:57.20px;top:90.8px;font-size:20px;color:#555;">tag1 <b>(28)</b></div>
<div class="sq" style="left:28px;top:128px;background:#0088ff"></div>
<div class="t" style="left:57.20px;top:130.8px;font-size:20px;color:#555;">tag2 <b>(28)</b></div>
<svg style="left:261.10px;top:97.90px" width="314.00" height="314.00" viewBox="2393.10 1001.90 314.00 314.00"><path d="M2550.10 1004.90 A154 154 0 0 1 2550.10 1312.90 L2550.10 1259.70 A100.8 100.8 0 0 0 2550.10 1058.10Z" fill="#249f67" stroke="#fff" stroke-width="2" stroke-linejoin="round"/><path d="M2550.10 1312.90 A154 154 0 0 1 2550.10 1004.90 L2550.10 1058.10 A100.8 100.8 0 0 0 2550.10 1259.70Z" fill="#0088ff" stroke="#fff" stroke-width="2" stroke-linejoin="round"/><text x="2677.5" y="1166.6" text-anchor="middle" font-size="21.5" fill="#fff" stroke="#fff" stroke-width="0.35">50%</text><text x="2422.7" y="1166.6" text-anchor="middle" font-size="21.5" fill="#fff" stroke="#fff" stroke-width="0.35">50%</text></svg>
</div>
<div class="card" style="left:122px;top:1350px;width:1320px;height:428px">
<div class="t" style="letter-spacing:0.56px;left:18.95px;top:18.9px;font-size:27px;color:#111;">New Alert Summary</div>
<div class="abs" style="left:20px;top:58px;width:1276px;height:2px;background:#e3e3e3"></div>
<div class="t" style="letter-spacing:0.84px;left:20.00px;top:74.4px;font-size:25px;color:#6a6a6a;">Time</div>
<div class="t" style="letter-spacing:-0.17px;left:279.45px;top:74.4px;font-size:25px;color:#6a6a6a;">Message</div>
<div class="t" style="letter-spacing:0.40px;left:540.50px;top:74.4px;font-size:25px;color:#6a6a6a;">Team</div>
<div class="t" style="letter-spacing:1.71px;left:797.85px;top:74.4px;font-size:25px;color:#6a6a6a;">Priority</div>
<div class="t" style="letter-spacing:0.23px;left:1059.30px;top:74.4px;font-size:25px;color:#6a6a6a;">Source</div>
<div class="abs" style="left:0;top:110px;width:1316px;height:2px;background:#ebebeb"></div>
<div class="abs" style="left:0;top:112px;width:1316px;height:2px;background:#f4f4f4"></div>
<div class="t" style="letter-spacing:-0.14px;left:18.37px;top:133.9px;font-size:28px;color:#111;">Nov 09, 04:36</div>
<div class="t" style="letter-spacing:1.20px;left:18.09px;top:177.9px;font-size:28px;color:#111;">PM</div>
<div class="t" style="letter-spacing:0.31px;left:280.80px;top:156.1px;font-size:28px;color:#111;">test alert</div>
<div class="t" style="letter-spacing:0.32px;left:539.04px;top:156.1px;font-size:28px;color:#111;">[object Object]</div>
<div class="t" style="letter-spacing:1.20px;left:797.59px;top:156.1px;font-size:28px;color:#111;">P1</div>
<div class="t" style="letter-spacing:0.07px;left:1060.28px;top:133.9px;font-size:28px;color:#111;">fili@ifountain.co</div>
<div class="t" style="left:1058.65px;top:177.9px;font-size:28px;color:#111;">m</div>
<div class="abs" style="left:0;top:226.0px;width:1316px;height:2px;background:#f3f3f3"></div>
<div class="t" style="letter-spacing:-0.14px;left:18.37px;top:248.2px;font-size:28px;color:#111;">Nov 09, 04:36</div>
<div class="t" style="letter-spacing:1.20px;left:18.09px;top:292.2px;font-size:28px;color:#111;">PM</div>
<div class="t" style="letter-spacing:0.31px;left:280.80px;top:270.4px;font-size:28px;color:#111;">test alert</div>
<div class="t" style="letter-spacing:0.32px;left:539.04px;top:270.4px;font-size:28px;color:#111;">[object Object]</div>
<div class="t" style="letter-spacing:1.20px;left:797.59px;top:270.4px;font-size:28px;color:#111;">P1</div>
<div class="t" style="letter-spacing:0.07px;left:1060.28px;top:248.2px;font-size:28px;color:#111;">fili@ifountain.co</div>
<div class="t" style="left:1058.65px;top:292.2px;font-size:28px;color:#111;">m</div>
<div class="abs" style="left:0;top:340.3px;width:1316px;height:2px;background:#f3f3f3"></div>
<div class="t" style="letter-spacing:-0.14px;left:18.37px;top:362.5px;font-size:28px;color:#111;">Nov 09, 04:36</div>
<div class="t" style="letter-spacing:1.20px;left:18.09px;top:406.5px;font-size:28px;color:#111;">PM</div>
<div class="t" style="letter-spacing:0.31px;left:280.80px;top:384.7px;font-size:28px;color:#111;">test alert</div>
<div class="t" style="letter-spacing:0.32px;left:539.04px;top:384.7px;font-size:28px;color:#111;">[object Object]</div>
<div class="t" style="letter-spacing:1.20px;left:797.59px;top:384.7px;font-size:28px;color:#111;">P1</div>
<div class="t" style="letter-spacing:0.07px;left:1060.28px;top:362.5px;font-size:28px;color:#111;">fili@ifountain.co</div>
<div class="t" style="left:1058.65px;top:406.5px;font-size:28px;color:#111;">m</div>
</div>
<div class="card" style="left:1462px;top:1350px;width:1318px;height:428px">
<div class="t" style="letter-spacing:0.49px;left:18.68px;top:18.9px;font-size:27px;color:#111;">Escalted Alerts</div>
<div class="abs" style="left:20px;top:58px;width:1274px;height:2px;background:#e3e3e3"></div>
<div class="t" style="letter-spacing:0.84px;left:19.20px;top:74.4px;font-size:25px;color:#6a6a6a;">Time</div>
<div class="t" style="letter-spacing:-0.17px;left:278.95px;top:74.4px;font-size:25px;color:#6a6a6a;">Message</div>
<div class="t" style="letter-spacing:0.22px;left:538.65px;top:74.4px;font-size:25px;color:#6a6a6a;">Escalation Name</div>
<div class="t" style="letter-spacing:0.34px;left:798.55px;top:74.4px;font-size:25px;color:#6a6a6a;">Escalation Time</div>
<div class="t" style="letter-spacing:0.94px;left:1059.30px;top:74.4px;font-size:25px;color:#6a6a6a;">Notify Name</div>
<div class="abs" style="left:0;top:110px;width:1314px;height:2px;background:#ebebeb"></div>
<div class="abs" style="left:0;top:112px;width:1314px;height:2px;background:#f4f4f4"></div>
<div class="t" style="letter-spacing:-0.02px;left:17.57px;top:133.9px;font-size:28px;color:#111;">Nov 10, 09:26</div>
<div class="t" style="letter-spacing:1.20px;left:19.70px;top:177.9px;font-size:28px;color:#111;">AM</div>
<div class="t" style="letter-spacing:0.07px;left:280.30px;top:156.1px;font-size:28px;color:#111;">test alert new</div>
<div class="t" style="letter-spacing:-0.92px;left:540.30px;top:156.1px;font-size:28px;color:#111;">test_esc_new</div>
<div class="t" style="left:797.65px;top:156.1px;font-size:28px;color:#111;">1</div>
<div class="t" style="letter-spacing:-0.05px;left:1060.70px;top:133.9px;font-size:28px;color:#111;">test@ifountain.co</div>
<div class="t" style="left:1059.35px;top:177.9px;font-size:28px;color:#111;">m</div>
<div class="abs" style="left:0;top:226.0px;width:1314px;height:2px;background:#f3f3f3"></div>
<div class="t" style="letter-spacing:-0.02px;left:17.57px;top:248.2px;font-size:28px;color:#111;">Nov 10, 09:26</div>
<div class="t" style="letter-spacing:1.20px;left:19.70px;top:292.2px;font-size:28px;color:#111;">AM</div>
<div class="t" style="letter-spacing:0.07px;left:280.30px;top:270.4px;font-size:28px;color:#111;">test alert new</div>
<div class="t" style="letter-spacing:-0.92px;left:540.30px;top:270.4px;font-size:28px;color:#111;">test_esc_new</div>
<div class="t" style="left:797.65px;top:270.4px;font-size:28px;color:#111;">1</div>
<div class="t" style="letter-spacing:-0.05px;left:1060.70px;top:248.2px;font-size:28px;color:#111;">test@ifountain.co</div>
<div class="t" style="left:1059.35px;top:292.2px;font-size:28px;color:#111;">m</div>
<div class="abs" style="left:0;top:340.3px;width:1314px;height:2px;background:#f3f3f3"></div>
<div class="t" style="letter-spacing:-0.02px;left:17.57px;top:362.5px;font-size:28px;color:#111;">Nov 10, 09:26</div>
<div class="t" style="letter-spacing:1.20px;left:19.70px;top:406.5px;font-size:28px;color:#111;">AM</div>
<div class="t" style="letter-spacing:0.07px;left:280.30px;top:384.7px;font-size:28px;color:#111;">test alert new</div>
<div class="t" style="letter-spacing:-0.92px;left:540.30px;top:384.7px;font-size:28px;color:#111;">test_esc_new</div>
<div class="t" style="left:797.65px;top:384.7px;font-size:28px;color:#111;">1</div>
<div class="t" style="letter-spacing:-0.05px;left:1060.70px;top:362.5px;font-size:28px;color:#111;">test@ifountain.co</div>
<div class="t" style="left:1059.35px;top:406.5px;font-size:28px;color:#111;">m</div>
</div>
</body>
</html>
